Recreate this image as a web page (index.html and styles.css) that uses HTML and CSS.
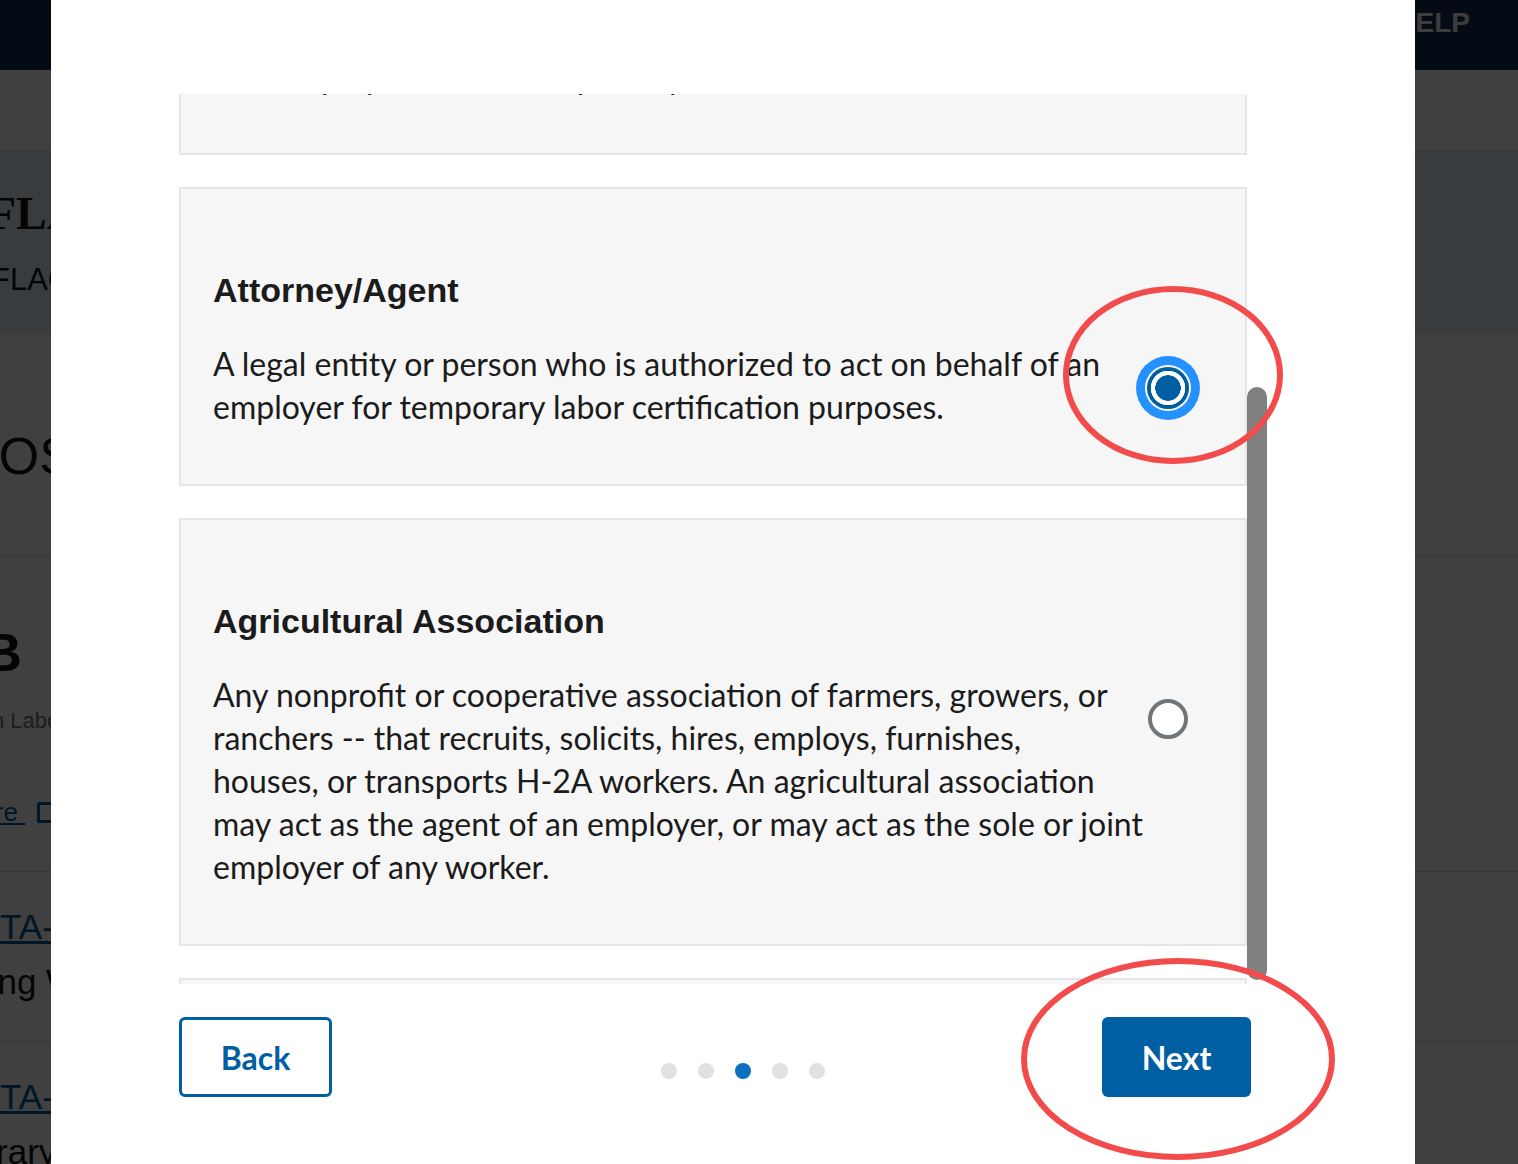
FILE: index.html
```html
<!DOCTYPE html>
<html lang="en">
<head>
    <meta charset="UTF-8">
    <meta name="viewport" content="width=device-width, initial-scale=1.0">
    <title>FLAG - Who are you?</title>
    <link rel="stylesheet" href="styles.css">
</head>
<body>
<div class="page">
    <header class="site-header">
        <span class="site-help">HELP</span>
    </header>
    <div class="site-nav"></div>
    <section class="hero">
        <div class="hero-title">FLAG</div>
        <div class="hero-subtitle">FLAG Case Status Search</div>
    </section>
    <main class="page-main">
        <h2 class="main-heading">POSTINGS</h2>
        <hr class="main-rule">
        <div class="job-title">JOB</div>
        <div class="job-meta">Office of Foreign Labor Certification</div>
        <a class="job-link" href="#">Learn more <span class="ext-icon"></span></a>
        <hr class="main-rule rule-gap">
        <a class="case-link" href="#">TA-23123-1</a>
        <div class="case-text">Farming Work</div>
        <hr class="main-rule rule-short">
        <a class="case-link" href="#">TA-23187-4</a>
        <div class="case-text case-last">Temporary</div>
    </main>
</div>

<div class="overlay"></div>

<div class="modal">
    <div class="options">
        <div class="options-list">
            <label class="tile">
                <span class="tile-title">Employer</span>
                <span class="tile-control"><span class="radio"></span></span>
                <span class="tile-text tile-text-first">A person, firm, corporation or other association or organization that employs workers temporarily in the United States.</span>
            </label>
            <label class="tile">
                <span class="tile-title">Attorney/Agent</span>
                <span class="tile-control"><span class="radio radio-checked"></span></span>
                <span class="tile-text">A legal entity or person who is authorized to act on behalf of an employer for temporary labor certification purposes.</span>
            </label>
            <label class="tile">
                <span class="tile-title">Agricultural Association</span>
                <span class="tile-control"><span class="radio"></span></span>
                <span class="tile-text">Any nonprofit or cooperative association of farmers, growers, or ranchers -- that recruits, solicits, hires, employs, furnishes,<br>houses, or transports H-2A workers. An agricultural association<br>may act as the agent of an employer, or may act as the sole or joint<br>employer of any worker.</span>
            </label>
            <label class="tile">
                <span class="tile-title">H-2A Labor Contractor</span>
                <span class="tile-control"><span class="radio"></span></span>
                <span class="tile-text">A person who recruits, solicits, hires, employs, furnishes, houses, or transports H-2A workers.</span>
            </label>
        </div>
        <div class="scroll-thumb"></div>
    </div>
    <div class="modal-footer">
        <button class="btn btn-outline">Back</button>
        <div class="steps">
            <span class="step"></span>
            <span class="step"></span>
            <span class="step step-current"></span>
            <span class="step"></span>
            <span class="step"></span>
        </div>
        <button class="btn btn-primary">Next</button>
    </div>
</div>

<svg class="marks" width="1518" height="1164" viewBox="0 0 1518 1164">
    <ellipse cx="1173" cy="375" rx="107" ry="86" fill="none" stroke="#f24b4b" stroke-width="6"/>
    <ellipse cx="1178" cy="1059" rx="154" ry="98" fill="none" stroke="#f24b4b" stroke-width="6"/>
</svg>
</body>
</html>
```

FILE: styles.css
```css
body {
    margin: 0;
    font-family: "Liberation Sans", Arial, sans-serif;
    background-color: #fff;
    color: #1b1b1b;
    overflow: hidden;
}

/* page behind the dialog */

.page {
    width: 1518px;
    height: 1164px;
    overflow: hidden;
}

.site-header {
    height: 70px;
    background-color: #162e51;
    display: flex;
    justify-content: flex-end;
}

.site-help {
    margin: 9px 48px 0 0;
    color: #f0f0f0;
    font-weight: bold;
    font-size: 28px;
    line-height: 28px;
}

.site-nav {
    height: 80px;
    background-color: #fff;
}

.hero {
    height: 183px;
    background-color: #e4f0f8;
    padding-top: 36px;
    box-sizing: border-box;
    color: #111;
}

.hero-title {
    font-family: "Liberation Serif", "Times New Roman", serif;
    font-weight: bold;
    font-size: 46px;
    line-height: 56px;
    text-indent: -12px;
}

.hero-subtitle {
    margin-top: 16px;
    font-size: 31px;
    line-height: 44px;
    text-indent: -9px;
    white-space: nowrap;
}

.page-main {
    color: #111;
}

.main-heading {
    margin: 88px 0 0;
    font-weight: normal;
    font-size: 52px;
    line-height: 70px;
    text-indent: -36px;
    white-space: nowrap;
}

.main-rule {
    margin: 64px 0 0;
    border: 0;
    border-top: 1px solid #d6d7d9;
}

.job-title {
    margin-top: 66px;
    font-weight: bold;
    font-size: 54px;
    line-height: 60px;
    text-indent: -89px;
}

.job-meta {
    margin-top: 25px;
    font-size: 22px;
    line-height: 28px;
    color: #71767a;
    text-indent: -158px;
    white-space: nowrap;
}

.job-link {
    display: block;
    margin-top: 61px;
    font-size: 26px;
    line-height: 32px;
    color: #005ea2;
    text-indent: -115px;
    white-space: nowrap;
}

.ext-icon {
    display: inline-block;
    width: 15px;
    height: 15px;
    margin-left: 12px;
    border: 3px solid #005ea2;
    border-radius: 2px;
    vertical-align: -2px;
}

.rule-gap {
    margin-top: 43px;
}

.case-link {
    display: block;
    margin-top: 33px;
    font-size: 35px;
    line-height: 44px;
    color: #005ea2;
    white-space: nowrap;
}

.case-text {
    margin-top: 11px;
    font-size: 35px;
    line-height: 44px;
    text-indent: -92px;
    white-space: nowrap;
}

.case-last {
    text-indent: -109px;
}

.rule-short {
    margin-top: 37px;
}

.overlay {
    position: fixed;
    inset: 0;
    background-color: rgba(0, 0, 0, 0.75);
}

/* dialog */

.modal {
    position: fixed;
    top: 0;
    bottom: 0;
    left: 51px;
    width: 1364px;
    background-color: #fff;
    padding: 94px 0 0 128px;
    box-sizing: border-box;
}

.options {
    position: relative;
    width: 1088px;
    height: 890px;
    overflow: hidden;
}

.options-list {
    margin-top: -238px;
    padding-right: 20px;
    display: flex;
    flex-direction: column;
    gap: 32px;
}

.tile {
    display: block;
    background-color: #f6f6f6;
    border: 2px solid #e6e6e6;
    padding: 81px 34px 56px 32px;
    cursor: pointer;
}

.tile-title {
    display: block;
    font-weight: bold;
    font-size: 34px;
    line-height: 40px;
    margin-bottom: 32px;
}

.tile-control {
    float: right;
    width: 86px;
    height: 80px;
    margin-top: 6px;
    display: flex;
    align-items: center;
    justify-content: center;
}

.tile-text {
    display: block;
    max-width: 990px;
    font-family: Lato, "Noto Sans", sans-serif;
    font-size: 32px;
    line-height: 43px;
}

.tile-text-first {
    padding-top: 1px;
    margin-bottom: -1px;
}

.radio {
    width: 32px;
    height: 32px;
    border: 4px solid #71767a;
    border-radius: 50%;
    background-color: #fff;
}

.radio-checked {
    width: 42px;
    height: 42px;
    border: 0;
    background: radial-gradient(circle, #005ea2 0 12.5px, #fff 13px 17px, #005ea2 17.5px 21px);
    box-shadow: 0 0 0 2px #fff, 0 0 0 11px #2491ff;
}

.scroll-thumb {
    position: absolute;
    top: 293px;
    right: 0;
    width: 20px;
    height: 593px;
    border-radius: 10px;
    background-color: #808080;
}

.modal-footer {
    width: 1072px;
    margin-top: 33px;
    display: flex;
    justify-content: space-between;
    align-items: flex-start;
}

.btn {
    height: 80px;
    border-radius: 6px;
    font-family: Lato, "Noto Sans", sans-serif;
    font-weight: bold;
    font-size: 32px;
    cursor: pointer;
}

.btn-outline {
    width: 153px;
    background-color: #fff;
    border: 3px solid #005ea2;
    color: #005ea2;
}

.btn-primary {
    width: 149px;
    background-color: #005ea2;
    border: 0;
    color: #fff;
}

.steps {
    margin: 46px 0 0 52px;
    display: flex;
    gap: 21px;
}

.step {
    width: 16px;
    height: 16px;
    border-radius: 50%;
    background-color: #dfe1e2;
}

.step-current {
    background-color: #0a6fbf;
}

.marks {
    position: fixed;
    top: 0;
    left: 0;
    pointer-events: none;
}
```
